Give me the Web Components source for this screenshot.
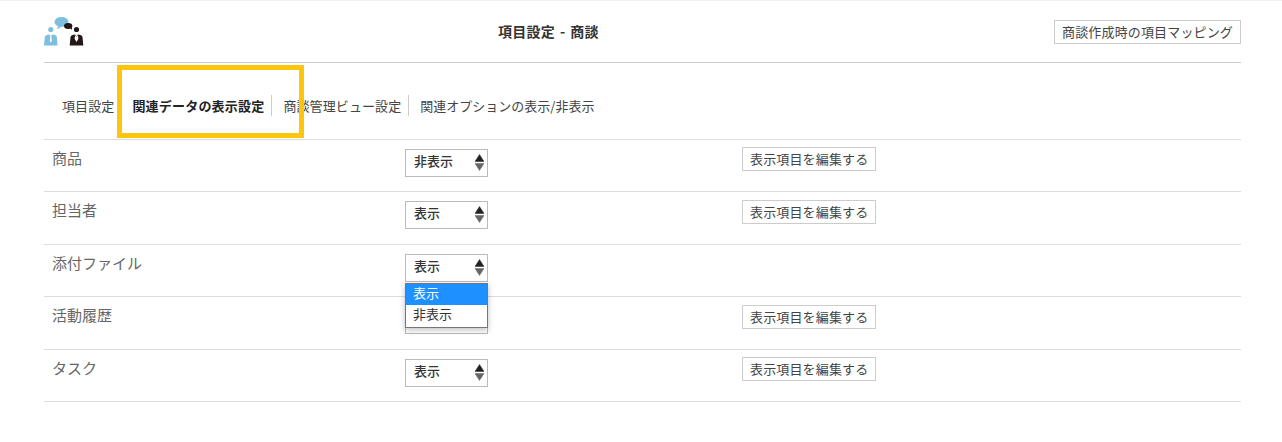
<!DOCTYPE html>
<html lang="ja">
<head>
<meta charset="utf-8">
<title>項目設定 - 商談</title>
<style>
  html,body{ margin:0; padding:0; background:#fff; }
  body{ font-family:"Noto Sans CJK JP","Liberation Sans",sans-serif; color:#333; }
</style>
</head>
<body>
<settings-page>
  <page-header slot="header" title-text="項目設定 - 商談" action="商談作成時の項目マッピング"></page-header>
  <tab-bar slot="tabs">
    <tab-item>項目設定</tab-item>
    <tab-item active>関連データの表示設定</tab-item>
    <tab-item>商談管理ビュー設定</tab-item>
    <tab-item last>関連オプションの表示/非表示</tab-item>
  </tab-bar>
  <setting-row label="商品" value="非表示" edit></setting-row>
  <setting-row label="担当者" value="表示" edit></setting-row>
  <setting-row label="添付ファイル" value="表示" open></setting-row>
  <setting-row label="活動履歴" value="表示" edit></setting-row>
  <setting-row label="タスク" value="表示" edit></setting-row>
</settings-page>

<script>
(function () {
  const FONT = '"Noto Sans CJK JP","Liberation Sans",sans-serif';

  class SettingsPage extends HTMLElement{
    constructor(){
      super();
      this.attachShadow({mode:'open'}).innerHTML = `
        <style>
          :host{ display:block; position:relative; height:442px; box-sizing:border-box;
                 padding:0 41px 0 44px; border-top:1px solid #f0f0f0; font-family:${FONT}; overflow:hidden; }
          .mark{ position:absolute; left:117px; top:64px; width:187px; height:73px; box-sizing:border-box;
                 border:5px solid #fdc50c; pointer-events:none; z-index:3; }
        </style>
        <slot name="header"></slot>
        <slot name="tabs"></slot>
        <slot></slot>
        <div class="mark"></div>`;
    }
  }

  class PageHeader extends HTMLElement{
    constructor(){
      super();
      this.attachShadow({mode:'open'}).innerHTML = `
        <style>
          :host{ display:grid; grid-template-columns:455px 1fr auto; align-items:center; height:61px;
                 border-bottom:1px solid #ccc; }
          svg{ display:block; width:41px; height:30px; margin-top:-2px; }
          h1{ margin:-2px 0 0 -1px; font-size:14px; font-weight:700; color:#333; letter-spacing:.25px; word-spacing:1.5px; }
        </style>
        <svg viewBox="0 0 41 30" aria-hidden="true">
          <ellipse cx="17.5" cy="6" rx="7" ry="5" fill="#7dbfe0"/>
          <path d="M14 10l-1 3.5 4.5-3z" fill="#7dbfe0"/>
          <ellipse cx="24.2" cy="10" rx="4.2" ry="3" fill="#231815"/>
          <path d="M26 12l2 2-.3-3z" fill="#231815"/>
          <circle cx="6.8" cy="13.5" r="2.6" fill="#7dbfe0"/>
          <path d="M0 29.5l.8-8.5q.3-1.5 2-1.9l2.6-.7 1.4 2 1.4-2 2.6.7q1.7.4 2 1.9l.8 8.5z" fill="#7dbfe0"/>
          <path d="M6.3 20h1l.5 5-1 1.5-1-1.5z" fill="#fff"/>
          <circle cx="32.5" cy="13.5" r="2.6" fill="#231815"/>
          <path d="M25.7 29.5l.8-8.5q.3-1.5 2-1.9l2.6-.7 1.4 2 1.4-2 2.6.7q1.7.4 2 1.9l.8 8.5z" fill="#231815"/>
          <path d="M31 19.2l1.5 1.6 1.5-1.6.4 3.5-1.9 3.3-1.9-3.3z" fill="#fff"/>
        </svg>
        <h1></h1>
        <edit-button></edit-button>`;
    }
    connectedCallback(){
      const r = this.shadowRoot;
      r.querySelector('h1').textContent = this.getAttribute('title-text') || '';
      r.querySelector('edit-button').textContent = this.getAttribute('action') || '';
    }
  }

  class TabBar extends HTMLElement{
    constructor(){
      super();
      this.attachShadow({mode:'open'}).innerHTML = `
        <style>
          :host{ display:flex; align-items:center; height:77px; box-sizing:border-box; padding:9px 0 0 18px;
                 border-bottom:1px solid #ddd; }
        </style>
        <slot></slot>`;
    }
  }

  class TabItem extends HTMLElement{
    constructor(){
      super();
      this.attachShadow({mode:'open'}).innerHTML = `
        <style>
          :host{ display:block; font-size:13px; line-height:21px; color:#444; padding-right:7px; margin-right:11px;
                 letter-spacing:.1px; border-right:1px solid #ccc; white-space:nowrap; }
          :host(:first-child){ padding-right:5px; margin-right:12px; border-right-color:#e4e4e4; }
          :host([active]){ font-weight:700; color:#222; letter-spacing:.2px; padding-right:7px; margin-right:11px; }
          :host([last]){ border-right:0; letter-spacing:0; }
        </style>
        <slot></slot>`;
    }
  }

  class SettingRow extends HTMLElement{
    constructor(){
      super();
      this.attachShadow({mode:'open'}).innerHTML = `
        <style>
          :host{ display:grid; grid-template-columns:361px 337px 1fr; height:52.4px; box-sizing:border-box;
                 border-bottom:1px solid #ddd; position:relative; }
          .label{ padding:7px 0 0 8px; font-size:15px; line-height:22px; color:#666; }
          .sel{ padding-top:9px; }
          .act{ padding-top:7.4px; }
        </style>
        <div class="label"></div>
        <div class="sel"><fake-select></fake-select></div>
        <div class="act"></div>`;
    }
    connectedCallback(){
      const r = this.shadowRoot;
      r.querySelector('.label').textContent = this.getAttribute('label') || '';
      const s = r.querySelector('fake-select');
      s.setAttribute('value', this.getAttribute('value') || '');
      if (this.hasAttribute('open')) { s.setAttribute('open',''); this.style.zIndex = 2; }
      if (this.hasAttribute('edit')) {
        const b = document.createElement('edit-button');
        b.textContent = '表示項目を編集する';
        r.querySelector('.act').appendChild(b);
      }
    }
  }

  class FakeSelect extends HTMLElement{
    constructor(){
      super();
      this.attachShadow({mode:'open'}).innerHTML = `
        <style>
          :host{ display:block; position:relative; width:83px; height:28px; box-sizing:border-box;
                 border:1px solid #bbb; background:#fff; font-size:13px; color:#333; }
          .val{ display:block; padding-left:8px; line-height:21px; font-weight:500; }
          svg{ position:absolute; right:3px; top:4px; width:9px; height:17px; }
          .menu{ display:none; position:absolute; left:-1px; top:28px; width:83px; box-sizing:border-box;
                 border:1px solid #767676; background:#fff; box-shadow:0 2px 6px rgba(0,0,0,.25); z-index:5; }
          :host([open]) .menu{ display:block; }
          .opt{ height:21.5px; line-height:18px; padding-left:7px; }
          .opt.on{ background:#1e90ff; color:#fff; }
        </style>
        <span class="val"></span>
        <svg viewBox="0 0 9 17" aria-hidden="true">
          <path d="M4.5 .5L9 7.5H0z" fill="#222" stroke="#222" stroke-width=".5" stroke-linejoin="round"/>
          <path d="M4.5 16.5L9 9.5H0z" fill="#666" stroke="#666" stroke-width=".5" stroke-linejoin="round"/>
        </svg>
        <div class="menu">
          <div class="opt on">表示</div>
          <div class="opt">非表示</div>
        </div>`;
    }
    connectedCallback(){
      this.shadowRoot.querySelector('.val').textContent = this.getAttribute('value') || '';
    }
  }

  class EditButton extends HTMLElement{
    constructor(){
      super();
      this.attachShadow({mode:'open'}).innerHTML = `
        <style>
          :host{ display:inline-block; vertical-align:top; box-sizing:border-box; height:24px; padding:0 7px;
                 border:1px solid #ccc; background:#fff; font-size:13px; line-height:22px; letter-spacing:.15px;
                 color:#444; white-space:nowrap; }
        </style>
        <slot></slot>`;
    }
  }

  customElements.define('settings-page', SettingsPage);
  customElements.define('page-header', PageHeader);
  customElements.define('tab-bar', TabBar);
  customElements.define('tab-item', TabItem);
  customElements.define('setting-row', SettingRow);
  customElements.define('fake-select', FakeSelect);
  customElements.define('edit-button', EditButton);
})();
</script>
</body>
</html>
